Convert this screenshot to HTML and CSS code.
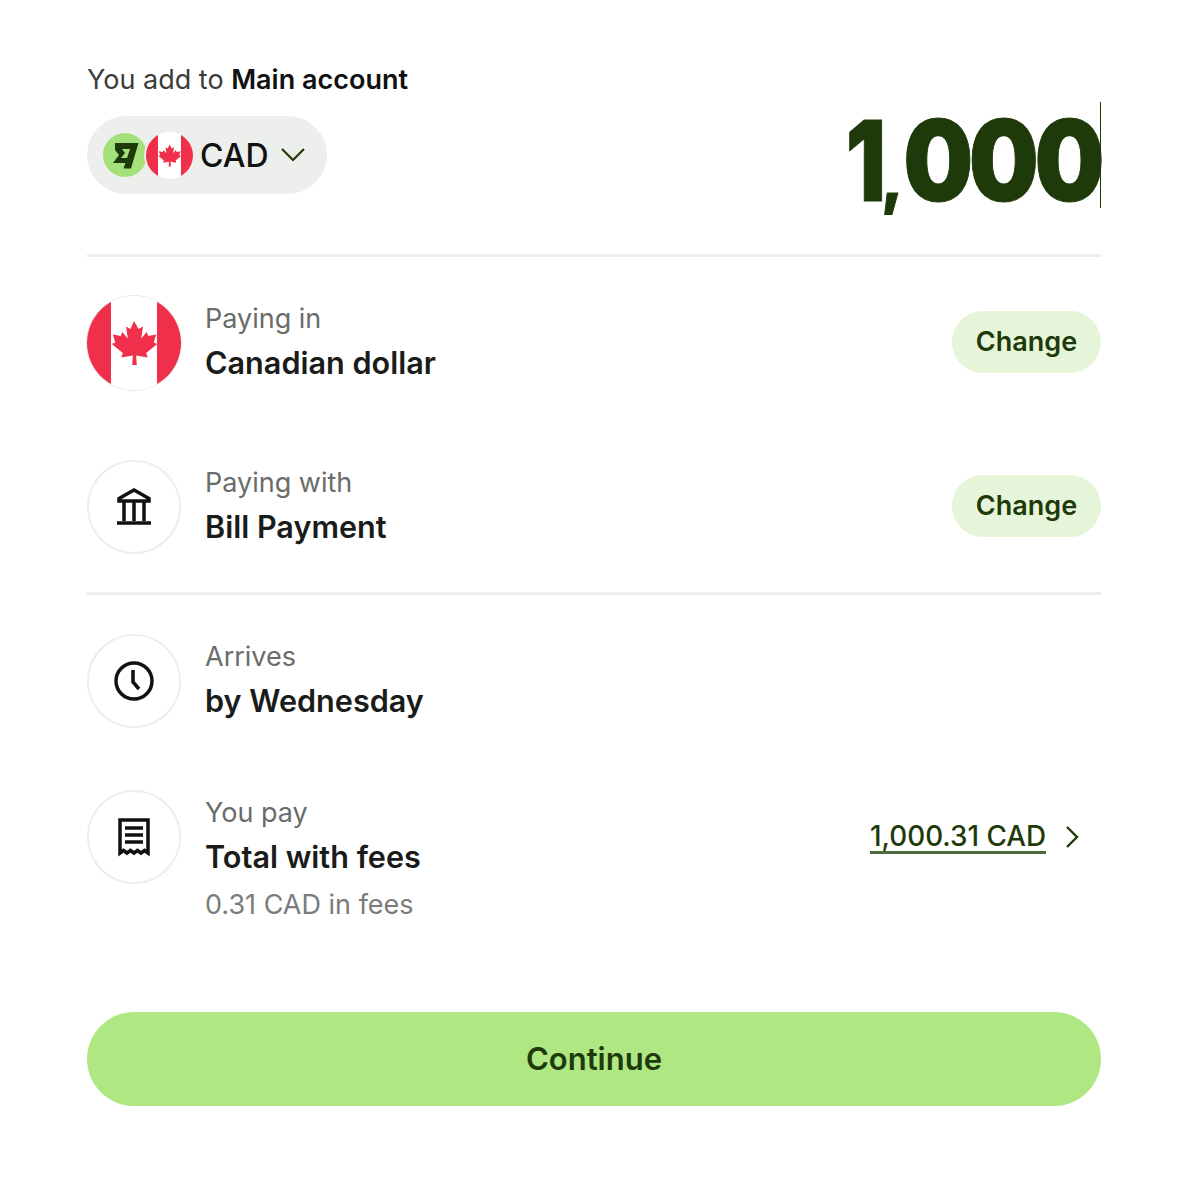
FILE: index.html
```html
<!DOCTYPE html>
<html lang="en">
<head>
    <meta charset="UTF-8">
    <meta name="viewport" content="width=device-width, initial-scale=1.0">
    <title>Add money</title>
    <link rel="stylesheet" href="styles.css">
</head>
<body>
    <svg class="defs" width="0" height="0">
        <defs>
            <symbol id="ca" viewBox="0 0 94 94">
                <rect width="94" height="94" fill="#fff"/>
                <rect width="24" height="94" fill="#f0304a"/>
                <rect x="70" width="24" height="94" fill="#f0304a"/>
                <path fill="#f0304a" d="M47 25l4.500 8 4.500-2.500-1.800 12 5.500-6.500 1.500 4 8-1.500-2.500 8 3.500 1.500-11 9 1.500 4.500-11.500-2 .6 9.500h-4.600l.6-9.500-11.500 2 1.500-4.500-11-9 3.500-1.500-2.500-8 8 1.500 1.500-4 5.500 6.500-1.800-12 4.500 2.500z"/>
            </symbol>
        </defs>
    </svg>

    <main class="page">
        <p class="add-to">You add to <strong>Main account</strong></p>

        <div class="amount-row">
            <button class="currency">
                <span class="wise-logo">
                    <svg viewBox="0 0 44 44" width="44" height="44">
                        <path fill="#1f3a0a" d="M12 10h23.500L28 35.500h-7.500L27 16h-8l3 4-4 5h6l-1.500 5H10l6-8-4-5z"/>
                    </svg>
                </span>
                <svg class="mini-flag" width="47" height="47"><use href="#ca"/></svg>
                <span class="code">CAD</span>
                <svg class="chevron" viewBox="0 0 26 16" width="26" height="16">
                    <path d="M2 2l11 11L24 2" fill="none" stroke="#1f3a0a" stroke-width="2.200"/>
                </svg>
            </button>
            <div class="amount"><span class="digits"><span class="kern-one">1</span><span class="kern-comma">,</span>000</span></div>
        </div>

        <hr class="divider first">

        <div class="row">
            <svg class="flag" width="94" height="94"><use href="#ca"/></svg>
            <div class="info">
                <div class="label">Paying in</div>
                <div class="value">Canadian dollar</div>
            </div>
            <button class="change">Change</button>
        </div>

        <div class="row tight">
            <div class="icon">
                <svg viewBox="0 0 40 40" width="40" height="40" fill="none" stroke="#111" stroke-width="3.500">
                    <path d="M5 11.500L20 3l15 8.500V14H5zM10 14v20M20 14v20M30 14v20M3 36h34"/>
                </svg>
            </div>
            <div class="info">
                <div class="label">Paying with</div>
                <div class="value">Bill Payment</div>
            </div>
            <button class="change">Change</button>
        </div>

        <hr class="divider">

        <div class="row short">
            <div class="icon">
                <svg viewBox="0 0 40 40" width="40" height="40" fill="none" stroke="#111" stroke-width="3.500">
                    <circle cx="20" cy="20" r="18"/>
                    <path d="M19 9v12l6 7"/>
                </svg>
            </div>
            <div class="info">
                <div class="label">Arrives</div>
                <div class="value">by Wednesday</div>
            </div>
        </div>

        <div class="row last">
            <div class="icon">
                <svg viewBox="0 0 40 40" width="40" height="40" fill="none" stroke="#111" stroke-width="3.500">
                    <path d="M6 36V3h28v33l-3.500-2.500-3.500 2.500-3.500-2.500L20 36l-3.500-2.500L13 36l-3.500-2.500z"/>
                    <path d="M11 11h18M11 18h18M11 25h18"/>
                </svg>
            </div>
            <div class="info">
                <div class="label">You pay</div>
                <div class="value">Total with fees</div>
                <div class="note">0.31 CAD in fees</div>
            </div>
            <a class="total" href="#">
                <span class="total-text">1,000.31 CAD</span>
                <svg viewBox="0 0 16 26" width="16" height="26">
                    <path d="M3 3l10 10L3 23" fill="none" stroke="#1f3a0a" stroke-width="2.400"/>
                </svg>
            </a>
        </div>

        <button class="continue">Continue</button>
    </main>
</body>
</html>
```

FILE: styles.css
```css
body {
    margin: 0;
    background: #fff;
    color: #1a1c1a;
    font-family: Inter, "Liberation Sans", sans-serif;
}
button {
    font-family: inherit;
    border: 0;
}
.defs {
    display: block;
    height: 0;
}
.page {
    width: 1014px;
    margin-left: 87px;
    padding-top: 62px;
}
.add-to {
    margin: 0;
    font-size: 27px;
    line-height: 36px;
    color: #3a3c3a;
}
.add-to strong {
    font-weight: 600;
    color: #111;
}
.amount-row {
    display: flex;
    justify-content: space-between;
    align-items: center;
    margin-top: 4px;
}
.currency {
    display: flex;
    align-items: center;
    width: 240px;
    height: 78px;
    padding: 0 0 0 16px;
    border-radius: 39px;
    background: #edefec;
}
.wise-logo {
    width: 44px;
    height: 44px;
    border-radius: 50%;
    background: #a5e17a;
}
.mini-flag {
    margin-left: -1px;
    border-radius: 50%;
    box-shadow: 0 0 0 2px #edefec;
}
.code {
    margin-left: 7px;
    font-size: 32px;
    font-weight: 500;
    color: #111;
}
.chevron {
    margin-left: 11px;
}
.amount {
    box-sizing: border-box;
    height: 106px;
    padding-top: 10px;
    border-right: 1px solid #1f3a0a;
    font-size: 112px;
    font-weight: 900;
    line-height: 96px;
    color: #1f3a0a;
    -webkit-text-stroke: 1px #1f3a0a;
}
.digits {
    display: inline-block;
    letter-spacing: -5px;
    transform: scaleX(0.88);
    transform-origin: right center;
}
.kern-one {
    display: inline-block;
    letter-spacing: -10px;
    transform: scaleX(0.9);
    transform-origin: left center;
}
.kern-comma {
    font-size: 66px;
    letter-spacing: 0;
}
.divider {
    height: 3px;
    margin: 0 0 39px;
    border: 0;
    background: #ededeb;
}
.divider.first {
    margin-top: 46px;
}
.row {
    display: flex;
    align-items: flex-start;
    min-height: 94px;
    margin-bottom: 70px;
}
.row.tight {
    margin-bottom: 38px;
}
.row.short {
    margin-bottom: 62px;
}
.row.last {
    margin-bottom: 89px;
}
.flag {
    flex: none;
    border-radius: 50%;
    box-shadow: 0 0 0 1px #e8e8e6;
}
.icon {
    flex: none;
    display: flex;
    align-items: center;
    justify-content: center;
    box-sizing: border-box;
    width: 94px;
    height: 94px;
    border: 2px solid #eeeeec;
    border-radius: 50%;
}
.info {
    flex: 1;
    margin-left: 24px;
    padding-top: 5px;
}
.label {
    font-size: 27px;
    line-height: 36px;
    color: #6a6c6a;
}
.value {
    margin-top: 8px;
    font-size: 30.600px;
    font-weight: 600;
    line-height: 36px;
    color: #1a1c1a;
}
.note {
    margin-top: 12px;
    font-size: 27px;
    line-height: 36px;
    color: #7a7c7a;
}
.change {
    align-self: center;
    width: 149px;
    height: 62px;
    margin-bottom: 2px;
    padding-bottom: 2px;
    border-radius: 31px;
    background: #e6f5d9;
    font-size: 27px;
    font-weight: 600;
    color: #1f3a0a;
}
.total {
    display: flex;
    align-items: center;
    gap: 18px;
    height: 94px;
    padding-right: 21px;
    font-size: 27.800px;
    font-weight: 500;
    color: #1f3a0a;
    text-decoration: none;
}
.total-text {
    border-bottom: 3px solid #4f6a3a;
    line-height: 30px;
}
.continue {
    display: block;
    width: 100%;
    height: 94px;
    padding-bottom: 2px;
    border-radius: 47px;
    background: #afe783;
    font-size: 31px;
    font-weight: 600;
    color: #1f3a0a;
}
```
